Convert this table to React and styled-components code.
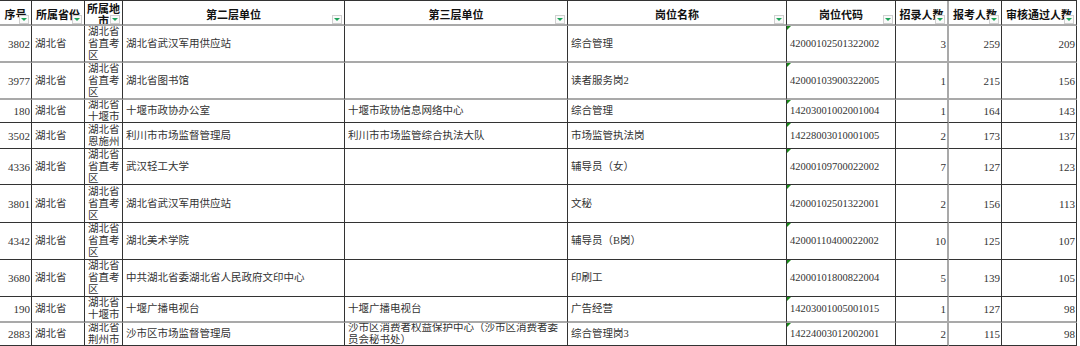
import React from 'react';
import styled, { createGlobalStyle } from 'styled-components';

const GlobalStyle = createGlobalStyle`
  html, body {
    margin: 0;
    padding: 0;
    background: #ffffff;
  }
  body {
    font-family: "Liberation Serif", "Noto Sans CJK SC", serif;
  }
`;

const COLS = '32px 53px 38px 222px 223px 219px 109px 53px 53px 75px';

const Sheet = styled.div`
  width: 1077px;
  border-top: 1px solid #333;
  display: flex;
  flex-direction: column;
`;

const Row = styled.div`
  display: grid;
  grid-template-columns: ${COLS};
  height: ${(p) => p.$h}px;
  box-sizing: border-box;
`;

const Cell = styled.div`
  position: relative;
  box-sizing: border-box;
  display: flex;
  align-items: center;
  justify-content: ${(p) => (p.$num ? 'flex-end' : 'flex-start')};
  padding: 0 ${(p) => (p.$num ? '1px' : '2px')} 0 3px;
  border-right: ${(p) => (p.$gray ? '2px solid #a9a9a9' : '1px solid #333')};
  border-bottom: ${(p) => (p.$thick ? '2px solid #a9a9a9' : '1px solid #333')};
  overflow: hidden;
  color: #333;
  font-size: ${(p) => (p.$num ? '11px' : '10.5px')};
  line-height: 12px;
  white-space: ${(p) => (p.$num ? 'nowrap' : 'normal')};
  word-break: break-all;
`;

const CodeMark = styled.span`
  position: absolute;
  left: 0;
  top: 0;
  width: 0;
  height: 0;
  border-top: 4px solid #1a8a1a;
  border-right: 4px solid transparent;
`;

const HeadCell = styled.div`
  position: relative;
  box-sizing: border-box;
  display: flex;
  align-items: center;
  justify-content: center;
  text-align: center;
  padding: 2px 1px 0;
  border-right: ${(p) => (p.$gray ? '2px solid #a9a9a9' : '1px solid #333')};
  border-bottom: 2px solid #a9a9a9;
  overflow: hidden;
  color: #111;
  font-family: "Noto Sans CJK SC", sans-serif;
  font-weight: 700;
  font-size: 11px;
  line-height: 12px;
  word-break: break-all;
`;

const HeadText = styled.span`
  white-space: ${(p) => (p.$wrap ? 'normal' : 'nowrap')};
`;

const FilterButton = styled.span`
  position: absolute;
  right: 2px;
  bottom: 0;
  width: 10px;
  height: 9px;
  box-sizing: border-box;
  background: #fafafa;
  border: 1px solid #d0d0d0;
  display: flex;
  align-items: center;
  justify-content: center;
  z-index: 2;

  &::after {
    content: '';
    width: 0;
    height: 0;
    border-left: 3px solid transparent;
    border-right: 3px solid transparent;
    border-top: 3px solid #1fa35a;
  }
`;

const headers = [
  '序号',
  '所属省份',
  '所属地市',
  '第二层单位',
  '第三层单位',
  '岗位名称',
  '岗位代码',
  '招录人数',
  '报考人数',
  '审核通过人数',
];

const rows = [
  { h: 37, thick: true, d: ['3802', '湖北省', '湖北省省直考区', '湖北省武汉军用供应站', '', '综合管理', '42000102501322002', '3', '259', '209'] },
  { h: 37, thick: true, d: ['3977', '湖北省', '湖北省省直考区', '湖北省图书馆', '', '读者服务岗2', '42000103900322005', '1', '215', '156'] },
  { h: 23, d: ['180', '湖北省', '湖北省十堰市', '十堰市政协办公室', '十堰市政协信息网络中心', '综合管理', '14203001002001004', '1', '164', '143'] },
  { h: 26, d: ['3502', '湖北省', '湖北省恩施州', '利川市市场监督管理局', '利川市市场监管综合执法大队', '市场监管执法岗', '14228003010001005', '2', '173', '137'] },
  { h: 36, d: ['4336', '湖北省', '湖北省省直考区', '武汉轻工大学', '', '辅导员（女）', '42000109700022002', '7', '127', '123'] },
  { h: 38, d: ['3801', '湖北省', '湖北省省直考区', '湖北省武汉军用供应站', '', '文秘', '42000102501322001', '2', '156', '113'] },
  { h: 37, d: ['4342', '湖北省', '湖北省省直考区', '湖北美术学院', '', '辅导员（B岗）', '42000110400022002', '10', '125', '107'] },
  { h: 37, d: ['3680', '湖北省', '湖北省省直考区', '中共湖北省委湖北省人民政府文印中心', '', '印刷工', '42000101800822004', '5', '139', '105'] },
  { h: 26, thick: true, d: ['190', '湖北省', '湖北省十堰市', '十堰广播电视台', '十堰广播电视台', '广告经营', '14203001005001015', '1', '127', '98'] },
  { h: 23, d: ['2883', '湖北省', '湖北省荆州市', '沙市区市场监督管理局', '沙市区消费者权益保护中心（沙市区消费者委员会秘书处）', '综合管理岗3', '14224003012002001', '2', '115', '98'] },
];

const NUM_COLS = [0, 7, 8, 9];
const GRAY_COL = 7;
const CODE_COL = 6;

export default function App() {
  return (
    <>
      <GlobalStyle />
      <Sheet>
        <Row $h={25}>
          {headers.map((t, i) => (
            <HeadCell key={t} $gray={i === GRAY_COL}>
              <HeadText $wrap={i === 2}>{t}</HeadText>
              <FilterButton />
            </HeadCell>
          ))}
        </Row>
        {rows.map((r) => (
          <Row key={r.d[0]} $h={r.h}>
            {r.d.map((v, i) => (
              <Cell
                key={i}
                $num={NUM_COLS.includes(i)}
                $gray={i === GRAY_COL}
                $thick={r.thick}
              >
                {i === CODE_COL && <CodeMark />}
                {v}
              </Cell>
            ))}
          </Row>
        ))}
      </Sheet>
    </>
  );
}
